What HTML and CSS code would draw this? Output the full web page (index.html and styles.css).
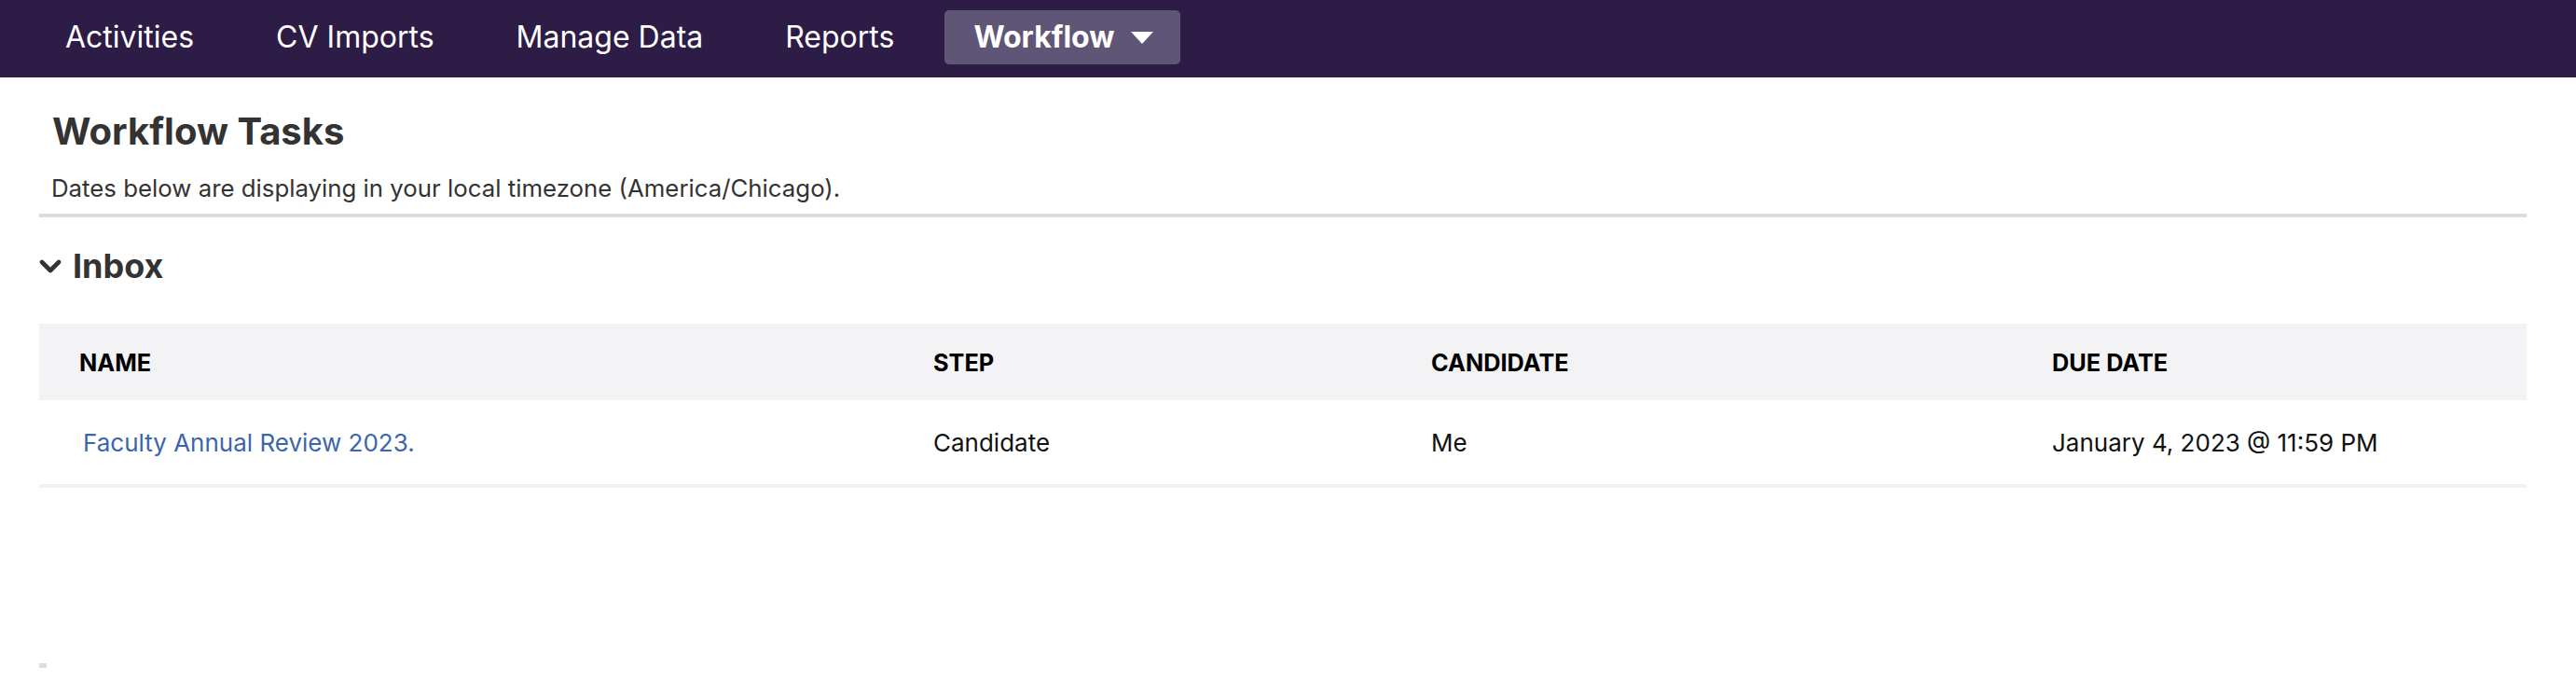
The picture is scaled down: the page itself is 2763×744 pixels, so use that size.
FILE: index.html
```html
<!DOCTYPE html>
<html lang="en">
<head>
<meta charset="utf-8">
<title>Workflow Tasks</title>
<link rel="stylesheet" href="styles.css">
</head>
<body>
<nav class="topnav">
  <a class="nav-item" href="#">Activities</a>
  <a class="nav-item" href="#">CV Imports</a>
  <a class="nav-item" href="#">Manage Data</a>
  <a class="nav-item" href="#">Reports</a>
  <a class="nav-item nav-active" href="#">Workflow <span class="caret"></span></a>
</nav>
<main class="content">
  <header class="page-head">
    <h1 class="page-title">Workflow Tasks</h1>
    <p class="page-note">Dates below are displaying in your local timezone (America/Chicago).</p>
  </header>
  <section class="inbox">
    <h2 class="section-title">
      <svg class="chevron" viewBox="0 0 24 16" width="24" height="16" aria-hidden="true"><path d="M3 3 L12 12 L21 3" fill="none" stroke="#333" stroke-width="4.6" stroke-linecap="round" stroke-linejoin="round"/></svg>
      Inbox
    </h2>
    <table class="tasks">
      <colgroup>
        <col class="c-name"><col class="c-step"><col class="c-cand"><col class="c-due">
      </colgroup>
      <thead>
        <tr><th>NAME</th><th>STEP</th><th>CANDIDATE</th><th>DUE DATE</th></tr>
      </thead>
      <tbody>
        <tr>
          <td><a class="task-link" href="#">Faculty Annual Review 2023.</a></td>
          <td>Candidate</td>
          <td>Me</td>
          <td>January 4, 2023 @ 11:59 PM</td>
        </tr>
      </tbody>
    </table>
  </section>
  <div class="footer-mark"></div>
</main>
</body>
</html>
```
FILE: styles.css
```css
html, body {
  margin: 0;
  padding: 0;
  background: #ffffff;
  font-family: Inter, "Liberation Sans", sans-serif;
  color: #333333;
}

.topnav {
  height: 83px;
  background: #2d1c45;
  display: flex;
  align-items: flex-start;
  padding: 11px 0 0 38px;
  gap: 24px;
  box-sizing: border-box;
}

.nav-item {
  color: #ffffff;
  text-decoration: none;
  font-size: 32px;
  line-height: 58px;
  height: 58px;
  padding: 0 32px;
  border-radius: 5px;
  display: flex;
  align-items: center;
  white-space: nowrap;
}

.nav-active {
  background: #5f5677;
  font-weight: 700;
  padding: 0 29px 0 31px;
  margin-left: -2px;
}

.caret {
  display: inline-block;
  width: 0;
  height: 0;
  margin-left: 17px;
  border-left: 12px solid transparent;
  border-right: 12px solid transparent;
  border-top: 13px solid #ffffff;
}

.content {
  padding: 0 53px 0 42px;
}

.page-head {
  border-bottom: 4px solid #dcdcdc;
  padding: 33px 0 10px;
}

.page-title {
  margin: 0;
  padding-left: 14px;
  font-size: 40px;
  line-height: 50px;
  font-weight: 700;
  color: #333333;
}

.page-note {
  margin: 18px 0 0;
  padding-left: 13px;
  font-size: 25.8px;
  line-height: 35px;
  color: #333333;
}

.section-title {
  margin: 31px 0 41px;
  display: flex;
  align-items: center;
  gap: 12px;
  font-size: 36px;
  line-height: 42px;
  font-weight: 700;
  color: #333333;
}

.chevron {
  display: block;
  width: 24px;
  height: 16px;
  margin-top: 1px;
}

.tasks {
  width: 100%;
  border-collapse: collapse;
  table-layout: fixed;
}

.c-name { width: 916px; }
.c-step { width: 534px; }
.c-cand { width: 666px; }
.c-due { width: auto; }

.tasks thead tr {
  background: #f3f3f5;
}

.tasks th {
  height: 82px;
  padding: 0 0 0 43px;
  text-align: left;
  font-size: 25.3px;
  font-weight: 700;
  color: #000000;
  vertical-align: middle;
}

.tasks td {
  height: 90px;
  padding: 0 0 0 43px;
  font-size: 26px;
  color: #111111;
  vertical-align: middle;
  border-bottom: 4px solid #f1f1f3;
}

.task-link {
  color: #3b65ad;
  text-decoration: none;
  margin-left: 4px;
}

.footer-mark {
  width: 8px;
  height: 5px;
  background: #dddddd;
  margin-top: 188px;
}
```
